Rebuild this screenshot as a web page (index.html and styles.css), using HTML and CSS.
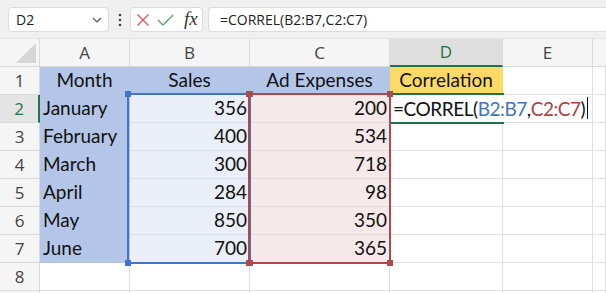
FILE: index.html
```html
<!DOCTYPE html>
<html>
<head>
<meta charset="utf-8">
<link rel="stylesheet" href="styles.css">
</head>
<body>
<div class="topbar">
  <div class="namebox">
    <span class="name">D2</span>
    <svg class="chev" width="10" height="6" viewBox="0 0 10 6"><path d="M1 1 L5 5 L9 1" fill="none" stroke="#555" stroke-width="1.2"/></svg>
  </div>
  <div class="dots">
    <svg width="4" height="14" viewBox="0 0 4 14"><circle cx="2" cy="2" r="1.3" fill="#444"/><circle cx="2" cy="7" r="1.3" fill="#444"/><circle cx="2" cy="12" r="1.3" fill="#444"/></svg>
  </div>
  <div class="fxbox">
    <svg class="ico-x" width="12" height="12" viewBox="0 0 12 12"><path d="M0.5 0.5 L11.5 11.5 M11.5 0.5 L0.5 11.5" stroke="#e25050" stroke-width="1.3" fill="none"/></svg>
    <svg class="ico-check" width="17" height="12" viewBox="0 0 17 12"><path d="M1 6 L6 11 L16 1" stroke="#5aa564" stroke-width="1.3" fill="none"/></svg>
    <span class="fx">fx</span>
  </div>
  <div class="formula">=CORREL(B2:B7,C2:C7)</div>
</div>

<div class="grid-wrap">
  <div class="sheet">
    <div class="corner"><svg width="20" height="20" viewBox="0 0 20 20"><path d="M20 0 L20 20 L0 20 Z" fill="#d6d6d6"/></svg></div>
    <div class="colh">A</div>
    <div class="colh">B</div>
    <div class="colh">C</div>
    <div class="colh active">D</div>
    <div class="colh">E</div>
    <div class="colh last"></div>

    <div class="rowh">1</div>
    <div class="c fill-blue center">Month</div>
    <div class="c fill-blue center">Sales</div>
    <div class="c fill-blue center">Ad Expenses</div>
    <div class="c fill-yellow center">Correlation</div>
    <div class="c"></div>
    <div class="c"></div>

    <div class="rowh active">2</div>
    <div class="c fill-blue">January</div>
    <div class="c hl-blue num">356</div>
    <div class="c hl-red num">200</div>
    <div class="c"></div>
    <div class="c"></div>
    <div class="c"></div>

    <div class="rowh">3</div>
    <div class="c fill-blue">February</div>
    <div class="c hl-blue num">400</div>
    <div class="c hl-red num">534</div>
    <div class="c"></div>
    <div class="c"></div>
    <div class="c"></div>

    <div class="rowh">4</div>
    <div class="c fill-blue">March</div>
    <div class="c hl-blue num">300</div>
    <div class="c hl-red num">718</div>
    <div class="c"></div>
    <div class="c"></div>
    <div class="c"></div>

    <div class="rowh">5</div>
    <div class="c fill-blue">April</div>
    <div class="c hl-blue num">284</div>
    <div class="c hl-red num">98</div>
    <div class="c"></div>
    <div class="c"></div>
    <div class="c"></div>

    <div class="rowh">6</div>
    <div class="c fill-blue">May</div>
    <div class="c hl-blue num">850</div>
    <div class="c hl-red num">350</div>
    <div class="c"></div>
    <div class="c"></div>
    <div class="c"></div>

    <div class="rowh">7</div>
    <div class="c fill-blue">June</div>
    <div class="c hl-blue num">700</div>
    <div class="c hl-red num">365</div>
    <div class="c"></div>
    <div class="c"></div>
    <div class="c"></div>

    <div class="rowh">8</div>
    <div class="c"></div>
    <div class="c"></div>
    <div class="c"></div>
    <div class="c"></div>
    <div class="c"></div>
    <div class="c"></div>

    <div class="rowh"></div>
    <div class="c"></div>
    <div class="c"></div>
    <div class="c"></div>
    <div class="c"></div>
    <div class="c"></div>
    <div class="c"></div>
  </div>

  <div class="sel-d2"></div>
  <div class="editor"><span>=CORREL(</span><span class="ref-b">B2:B7</span><span>,</span><span class="ref-c">C2:C7</span><span>)</span><span class="caret"></span></div>

  <div class="range range-b"><i class="h tl"></i><i class="h tr"></i><i class="h bl"></i><i class="h br"></i></div>
  <div class="range range-c"><i class="h tl"></i><i class="h tr"></i><i class="h bl"></i><i class="h br"></i></div>
</div>
</body>
</html>
```

FILE: styles.css
```css
* { box-sizing: border-box; }
html, body { margin: 0; padding: 0; }
body {
  width: 606px;
  height: 293px;
  overflow: hidden;
  background: #ffffff;
  font-family: "Open Sans", "Noto Sans", sans-serif;
}

/* ---------- formula bar ---------- */
.topbar {
  height: 39px;
  background: #f0f0f0;
  display: flex;
  align-items: flex-start;
  padding: 7px 0 0 8px;
  border-bottom: 1px solid #e4e4e4;
}
.namebox {
  width: 101px;
  height: 25px;
  background: #fff;
  border: 1px solid #dcdcdc;
  border-radius: 4px;
  display: flex;
  align-items: center;
  justify-content: space-between;
  padding: 0 6px 0 7px;
  font-size: 14px;
  color: #222;
}
.namebox .chev { margin-top: 1px; }
.dots {
  width: 21px;
  height: 25px;
  display: flex;
  align-items: center;
  justify-content: center;
}
.fxbox {
  width: 73px;
  height: 25px;
  background: #fff;
  border: 1px solid #dcdcdc;
  border-radius: 4px;
  display: flex;
  align-items: center;
  padding-left: 6px;
  gap: 8px;
}
.fx {
  font-family: "Liberation Serif", "DejaVu Serif", serif;
  font-style: italic;
  font-size: 19px;
  color: #333;
  margin-left: 2px;
  line-height: 1;
  margin-top: -2px;
}
.formula {
  margin-left: 5px;
  flex: 1;
  height: 25px;
  background: #fff;
  border: 1px solid #dcdcdc;
  border-right: none;
  border-radius: 4px 0 0 4px;
  padding-left: 11px;
  font-size: 14px;
  line-height: 23px;
  color: #222;
}

/* ---------- grid ---------- */
.grid-wrap { position: relative; }
.sheet {
  display: grid;
  grid-template-columns: 40px 90px 120px 140px 113px 90px 1fr;
  grid-template-rows: repeat(10, 28px);
  font-family: "Lato", "Liberation Sans", sans-serif;
}
.corner, .colh, .rowh {
  background: #f5f5f5;
  border-right: 1px solid #dadada;
  border-bottom: 1px solid #dadada;
}
.corner {
  display: flex;
  align-items: flex-end;
  justify-content: flex-end;
  padding: 0 3px 3px 0;
}
.colh {
  display: flex;
  align-items: center;
  justify-content: center;
  font-family: "Open Sans", "Noto Sans", sans-serif;
  font-size: 17px;
  color: #444;
  padding-bottom: 1px;
}
.colh.last { border-right: none; }
.colh.active {
  background: #dedede;
  color: #217346;
  border-bottom: 2px solid #217346;
}
.rowh {
  display: flex;
  align-items: center;
  justify-content: center;
  font-family: "Open Sans", "Noto Sans", sans-serif;
  font-size: 17px;
  color: #444;
}
.rowh.active {
  background: #e4e4e4;
  color: #217346;
  border-right: 2px solid #217346;
}
.c {
  border-right: 1px solid #e0e0e0;
  border-bottom: 1px solid #e0e0e0;
  display: flex;
  align-items: flex-end;
  padding: 0 3px 3px 3px;
  font-size: 19px;
  line-height: 22px;
  color: #111;
  white-space: nowrap;
}
.c.center { justify-content: center; }
.c.num { justify-content: flex-end; padding-right: 2px; }
.fill-blue { background: #b4c6e7; border-color: #b4c6e7; }
.fill-yellow { background: #ffd966; border-color: #ffd966; }
.hl-blue { background: #e9eef8; border-color: #d9dde6; }
.hl-red { background: #f6e9e9; border-color: #e6dada; }

/* ---------- overlays ---------- */
.sel-d2 {
  position: absolute;
  left: 389px;
  top: 54px;
  width: 115px;
  height: 31px;
  border: 2px solid #217346;
  border-right: none;
}
.editor {
  position: absolute;
  left: 391px;
  top: 56px;
  width: 201px;
  height: 27px;
  background: #fff;
  display: flex;
  align-items: flex-end;
  padding: 0 0 2px 2px;
  font-family: "Lato", "Liberation Sans", sans-serif;
  font-size: 19px;
  letter-spacing: -0.45px;
  line-height: 22px;
  color: #111;
  white-space: nowrap;
}
.ref-b { color: #4472c4; }
.ref-c { color: #b0403f; }
.caret {
  display: inline-block;
  width: 1px;
  height: 22px;
  background: #000;
  margin-left: 2px;
  align-self: center;
}
.range {
  position: absolute;
  top: 54px;
  height: 171px;
  border: 2px solid;
}
.range-b { left: 127px; width: 124px; border-color: #4472c4; }
.range-c { left: 248px; width: 143px; border-color: #b04a4a; }
.h {
  position: absolute;
  width: 6px;
  height: 6px;
}
.range-b .h { background: #4472c4; }
.range-c .h { background: #b04a4a; }
.h.tl { left: -4px; top: -4px; }
.h.tr { right: -4px; top: -4px; }
.h.bl { left: -4px; bottom: -4px; }
.h.br { right: -4px; bottom: -4px; }
```
